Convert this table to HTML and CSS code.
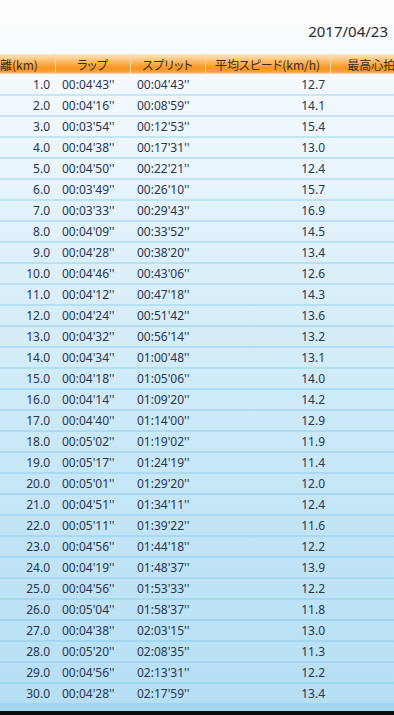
FILE: index.html
```html
<html lang="ja">
<head>
    <meta charset="UTF-8">
    <title>ラップ一覧</title>
    <link rel="stylesheet" href="styles.css">
</head>
<body>
	<div id="app">
		<div class="date-bar">
			<span class="date">2017/04/23</span>
		</div>

		<table class="laps">
			<colgroup>
				<col class="c-dist">
				<col class="c-lap">
				<col class="c-split">
				<col class="c-speed">
				<col class="c-hr">
			</colgroup>
			<thead>
				<tr>
					<th class="h-dist">距離(km)</th>
					<th>ラップ</th>
					<th>スプリット</th>
					<th>平均スピード(km/h)</th>
					<th>最高心拍数</th>
				</tr>
			</thead>
			<tbody id="lap-rows"></tbody>
		</table>
		<div class="bottom-strip"></div>
	</div>
	<div class="taskbar"></div>

	<script>
		var laps = [
			["00:04'43''", "00:04'43''", "12.7"],
			["00:04'16''", "00:08'59''", "14.1"],
			["00:03'54''", "00:12'53''", "15.4"],
			["00:04'38''", "00:17'31''", "13.0"],
			["00:04'50''", "00:22'21''", "12.4"],
			["00:03'49''", "00:26'10''", "15.7"],
			["00:03'33''", "00:29'43''", "16.9"],
			["00:04'09''", "00:33'52''", "14.5"],
			["00:04'28''", "00:38'20''", "13.4"],
			["00:04'46''", "00:43'06''", "12.6"],
			["00:04'12''", "00:47'18''", "14.3"],
			["00:04'24''", "00:51'42''", "13.6"],
			["00:04'32''", "00:56'14''", "13.2"],
			["00:04'34''", "01:00'48''", "13.1"],
			["00:04'18''", "01:05'06''", "14.0"],
			["00:04'14''", "01:09'20''", "14.2"],
			["00:04'40''", "01:14'00''", "12.9"],
			["00:05'02''", "01:19'02''", "11.9"],
			["00:05'17''", "01:24'19''", "11.4"],
			["00:05'01''", "01:29'20''", "12.0"],
			["00:04'51''", "01:34'11''", "12.4"],
			["00:05'11''", "01:39'22''", "11.6"],
			["00:04'56''", "01:44'18''", "12.2"],
			["00:04'19''", "01:48'37''", "13.9"],
			["00:04'56''", "01:53'33''", "12.2"],
			["00:05'04''", "01:58'37''", "11.8"],
			["00:04'38''", "02:03'15''", "13.0"],
			["00:05'20''", "02:08'35''", "11.3"],
			["00:04'56''", "02:13'31''", "12.2"],
			["00:04'28''", "02:17'59''", "13.4"]
		];

		var rows = document.getElementById("lap-rows");
		var html = "";
		for (var i = 0; i < laps.length; i++)
		{
			html += "<tr>"
				+ "<td class='num'>" + (i + 1).toFixed(1) + "</td>"
				+ "<td class='time'>" + laps[i][0] + "</td>"
				+ "<td class='time'>" + laps[i][1] + "</td>"
				+ "<td class='num'>" + laps[i][2] + "</td>"
				+ "<td></td>"
				+ "</tr>";
		}
		rows.innerHTML = html;
	</script>
</body>
</html>
```

FILE: styles.css
```css
body {
    margin: 0;
    padding: 0;
    width: 394px;
    height: 715px;
    overflow: hidden;
    font-family: "Noto Sans", "Noto Sans CJK JP", sans-serif;
    color: #2a3652;
    background: linear-gradient(#fdfeff 0px, #f2f9fd 90px, #d8eef9 300px, #c4e6f6 500px, #b6dff4 705px);
}

#app {
    height: 711px;
    overflow: hidden;
}

.date-bar {
    height: 54px;
    display: flex;
    justify-content: flex-end;
    align-items: center;
    padding-right: 6px;
    padding-top: 8px;
    box-sizing: border-box;
}

.date {
    font-size: 15px;
    color: #2b2b2b;
}

.laps {
    table-layout: fixed;
    border-collapse: collapse;
    border-spacing: 0;
    width: 440px;
    margin-left: -16px;
}

.c-dist { width: 71px; }
.c-lap { width: 75px; }
.c-split { width: 75px; }
.c-speed { width: 125px; }
.c-hr { width: 94px; }

.laps th {
    height: 20px;
    padding: 0;
    font-weight: normal;
    font-size: 12px;
    font-family: "Noto Sans CJK JP", sans-serif;
    font-feature-settings: "palt";
    color: #3a3020;
    text-align: center;
    white-space: nowrap;
    overflow: hidden;
    background: linear-gradient(#fde9c8 0%, #fbbd6c 35%, #f7951f 70%, #f8a23a 90%, #fde3c0 100%);
    border-left: 1px solid #fcd7a8;
}

.laps th.h-dist {
    text-align: left;
    padding-left: 4px;
    border-left: none;
}

.laps td {
    height: 21px;
    padding: 0;
    font-size: 12px;
    white-space: nowrap;
    border-bottom: 2px solid rgba(120, 195, 235, 0.35);
}

.laps td.num {
    text-align: right;
    padding-right: 5px;
}

.laps td.time {
    padding-left: 7px;
}

.bottom-strip {
    height: 8px;
    background: #a6d7f1;
}

.taskbar {
    height: 4px;
    background: #0c0c0e;
}
```
